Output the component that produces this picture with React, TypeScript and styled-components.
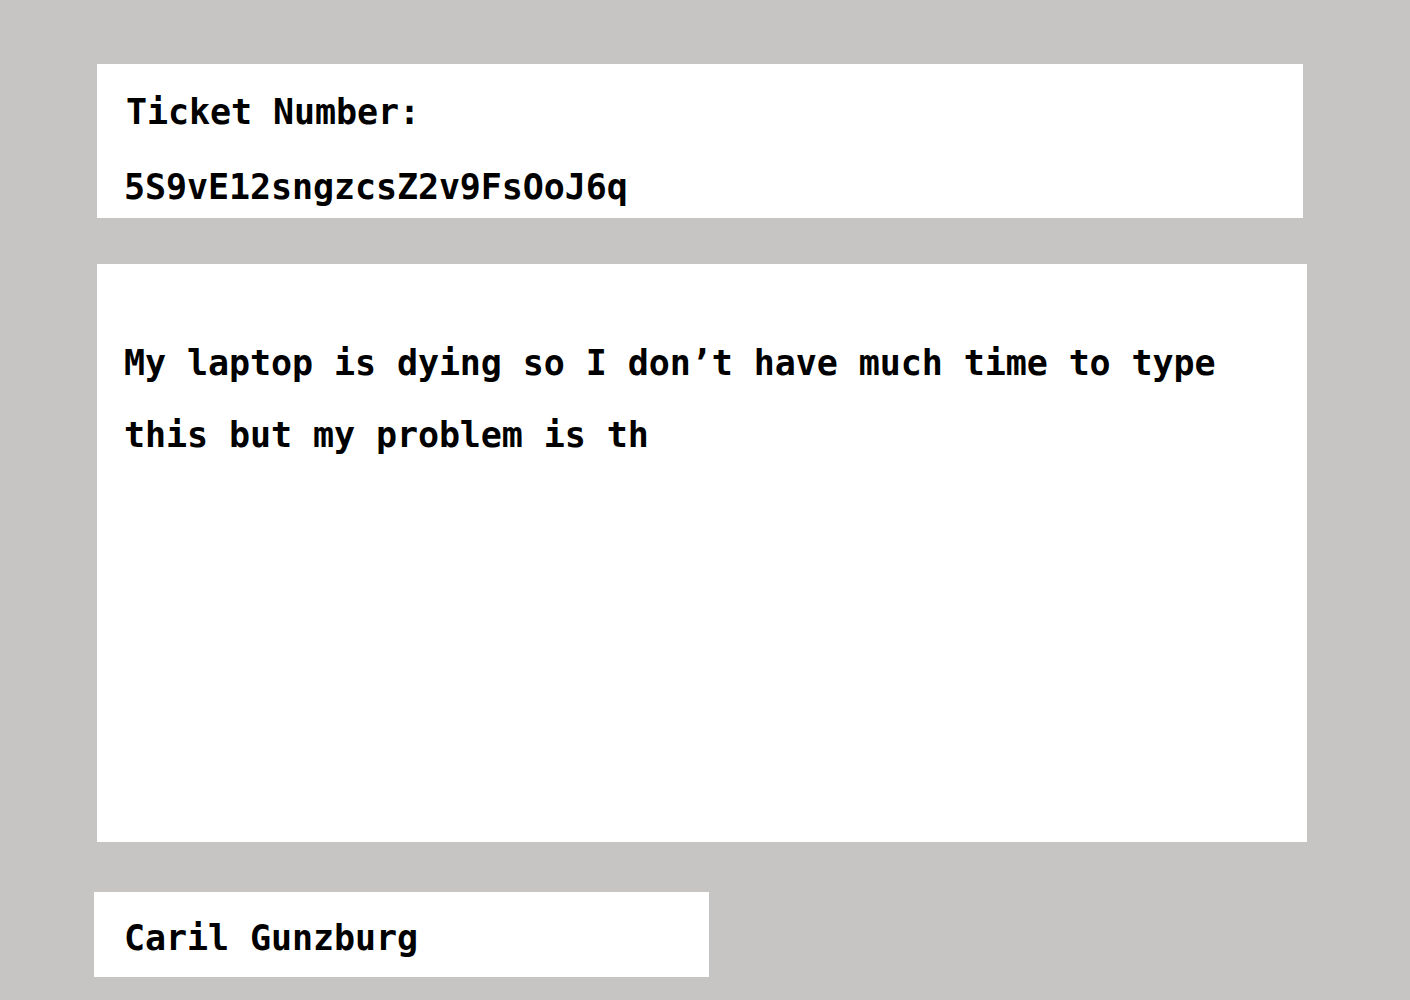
import React from "react";
import styled, { createGlobalStyle } from "styled-components";

const GlobalStyle = createGlobalStyle`
  html, body {
    margin: 0;
    padding: 0;
    background: #c6c5c3;
  }
  body {
    font-family: "DejaVu Sans Mono", "Liberation Mono", monospace;
    color: #000;
  }
`;

const App = () => {
  return (
    <>
      <GlobalStyle />
      <Page>
        <TicketCard>
          <Label>Ticket Number:</Label>
          <Value>5S9vE12sngzcsZ2v9FsOoJ6q</Value>
        </TicketCard>
        <MessageCard>
          My laptop is dying so I don’t have much time to type this but my
          problem is th
        </MessageCard>
        <NameCard>Caril Gunzburg</NameCard>
      </Page>
    </>
  );
};

const Page = styled.div`
  display: flex;
  flex-direction: column;
  align-items: flex-start;
  padding: 64px 0 0 97px;
  min-height: 936px;
`;
const Card = styled.div`
  background: #fff;
  box-sizing: border-box;
  font-size: 35px;
  font-weight: bold;
  letter-spacing: -0.08px;
`;
const TicketCard = styled(Card)`
  width: 1206px;
  height: 154px;
  padding: 28px 0 0 28px;
  display: flex;
  flex-direction: column;
  gap: 35px;
`;
const Label = styled.div`
  line-height: 40px;
  padding-left: 1px;
`;
const Value = styled.div`
  line-height: 40px;
  margin-left: -1px;
`;
const MessageCard = styled(Card)`
  margin-top: 46px;
  width: 1210px;
  height: 578px;
  padding: 63px 60px 0 27px;
  line-height: 72px;
`;
const NameCard = styled(Card)`
  margin-top: 50px;
  margin-left: -3px;
  width: 615px;
  height: 85px;
  padding: 26px 0 0 30px;
  line-height: 40px;
`;

export default App;
